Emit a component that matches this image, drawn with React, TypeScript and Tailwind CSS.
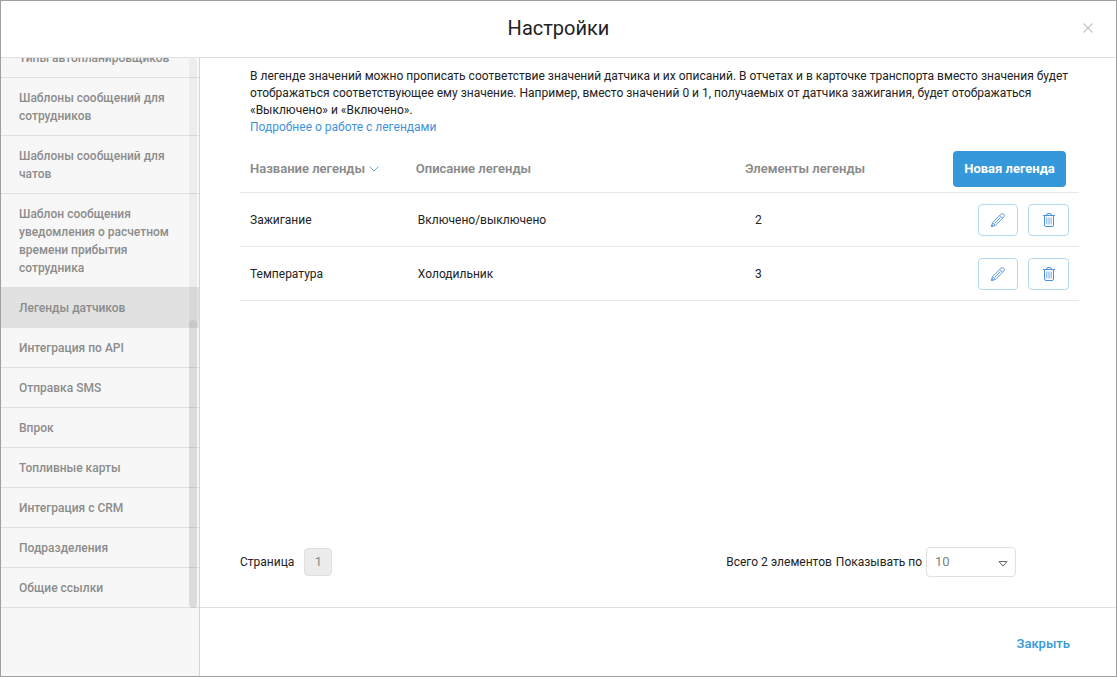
import { useState } from "react";
import clsx from "clsx";

const SECTIONS = [
  "Типы автопланировщиков",
  "Шаблоны сообщений для сотрудников",
  "Шаблоны сообщений для чатов",
  "Шаблон сообщения уведомления о расчетном времени прибытия сотрудника",
  "Легенды датчиков",
  "Интеграция по API",
  "Отправка SMS",
  "Впрок",
  "Топливные карты",
  "Интеграция с CRM",
  "Подразделения",
  "Общие ссылки",
];

const LEGENDS = [
  { name: "Зажигание", description: "Включено/выключено", count: 2 },
  { name: "Температура", description: "Холодильник", count: 3 },
];

const PAGE_SIZES = ["10", "25", "50"];

function PencilIcon() {
  return (
    <svg viewBox="0 0 14 14" className="h-3.5 w-3.5" fill="none" stroke="currentColor" strokeWidth="0.9" strokeLinejoin="round">
      <path d="M.6 13.4 1.5 9.7 10 1.2Q11.4.1 12.8 1.3 14 2.7 12.8 4L4.3 12.5Z" />
      <path d="M1.5 9.7 4.3 12.5M8.8 2.4 11.6 5.2M3.6 10.4 9.4 4.6" />
      <path d="M.6 13.4.9 12 2 13.1Z" fill="currentColor" />
    </svg>
  );
}

function TrashIcon() {
  return (
    <svg viewBox="0 0 12 14" className="h-3.5 w-3" fill="none" stroke="currentColor">
      <path d="M0 2.5H12M3.5 2.5Q3.5.5 5 .5H7Q8.5.5 8.5 2.5M1.5 3V12Q1.5 13.5 3 13.5H9Q10.5 13.5 10.5 12V3" />
      <path d="M3.8 4.5V11.5M6 4.5V11.5M8.2 4.5V11.5" strokeWidth="0.8" />
    </svg>
  );
}

export default function App() {
  const [active, setActive] = useState("Легенды датчиков");
  const [pageSize, setPageSize] = useState("10");

  return (
    <div className="flex h-screen flex-col border border-[#9f9f9f] bg-white font-['Roboto','Liberation_Sans',sans-serif] text-xs text-[#222]">
      {/* Header */}
      <header className="grid h-[57px] shrink-0 grid-cols-[1fr_auto_1fr] items-center border-b border-[#e0e0e0] px-5 pb-0.5">
        <h1 className="col-start-2 text-xl">Настройки</h1>
        <button aria-label="Закрыть окно" className="flex h-4 w-4 items-center justify-center justify-self-end text-[#c4c4c4]">
          <svg viewBox="0 0 10 10" className="h-2.5 w-2.5" stroke="currentColor" strokeWidth="1.2">
            <path d="M.5.5 9.5 9.5M9.5.5.5 9.5" />
          </svg>
        </button>
      </header>

      <div className="flex min-h-0 flex-1">
        {/* Sidebar */}
        <aside className="flex w-[199px] shrink-0 flex-col border-r border-[#d6d6d6] bg-[#f7f7f7]">
          <nav className="relative flex min-h-0 flex-1 flex-col justify-end overflow-hidden">
            {SECTIONS.map((section) => (
              <button
                key={section}
                onClick={() => setActive(section)}
                className={clsx(
                  "shrink-0 border-b pt-[11px] pr-6 pb-2.5 pl-[18px] text-left leading-[18px] font-medium text-[#8c8c8c]",
                  active === section ? "border-[#e1e1e1] bg-[#e1e1e1]" : "border-[#e0e0e0]"
                )}
              >
                {section}
              </button>
            ))}
            <div className="absolute inset-y-0 right-0.5 flex w-2 flex-col justify-end rounded-full bg-black/4">
              <div className="h-11/21 rounded-full bg-black/7" />
            </div>
          </nav>
          <div className="h-[68px] shrink-0" />
        </aside>

        <div className="flex min-w-0 flex-1 flex-col">
          <main className="flex min-h-0 flex-1 flex-col pt-2.5 pr-[37px] pb-[30px] pl-10">
            <p className="px-2.5 leading-[17px]">
              В легенде значений можно прописать соответствие значений датчика и их описаний. В отчетах и в карточке
              транспорта вместо значения будет отображаться соответствующее ему значение. Например, вместо значений 0 и
              1, получаемых от датчика зажигания, будет отображаться «Выключено» и «Включено».
              <br />
              <a href="#legends" className="text-[#3f93da]">Подробнее о работе с легендами</a>
            </p>

            <table className="mt-2.5 w-full table-fixed text-left">
              <thead>
                <tr className="h-[46px] border-b border-[#e8e8e8] text-[13px] text-[#8a8a8a]">
                  <th className="w-[20%] pl-2.5 font-semibold whitespace-nowrap">
                    <button className="flex items-center gap-1">
                      Название легенды
                      <svg viewBox="0 0 10 6" className="h-1.5 w-2.5 text-[#6fa8dc]" fill="none" stroke="currentColor">
                        <path d="M.5.5 5 5 9.5.5" />
                      </svg>
                    </button>
                  </th>
                  <th className="w-[39%] pl-2 font-semibold">Описание легенды</th>
                  <th className="w-[25%] pl-2.5 font-semibold">Элементы легенды</th>
                  <th className="pr-[13px] text-right">
                    <button className="h-9 w-[113px] rounded bg-[#3498db] font-bold whitespace-nowrap text-white">
                      Новая легенда
                    </button>
                  </th>
                </tr>
              </thead>
              <tbody>
                {LEGENDS.map((legend) => (
                  <tr key={legend.name} className="border-b border-[#e8e8e8]">
                    <td className="pt-0.5 pl-2.5">{legend.name}</td>
                    <td className="pt-0.5 pl-2.5">{legend.description}</td>
                    <td className="pt-0.5 pl-5">{legend.count}</td>
                    <td className="pt-[11px] pr-2.5 pb-2.5">
                      <div className="flex justify-end gap-2.5 text-[#4b90d9]">
                        <button aria-label="Изменить" className="flex h-8 w-10 items-center justify-center rounded border border-[#b5d8f1]">
                          <PencilIcon />
                        </button>
                        <button aria-label="Удалить" className="flex h-8 w-[41px] items-center justify-center rounded border border-[#b5d8f1]">
                          <TrashIcon />
                        </button>
                      </div>
                    </td>
                  </tr>
                ))}
              </tbody>
            </table>

            {/* Pagination */}
            <div className="mt-auto flex items-center justify-between pr-[63px]">
              <div className="flex items-center gap-2.5">
                Страница
                <button className="h-7 w-7 rounded-sm border border-[#e0e0e0] bg-[#ececec] text-[13px] text-[#8a8a8a]">1</button>
              </div>
              <div className="flex items-center gap-1">
                <span>Всего 2 элементов</span>
                <label htmlFor="page-size">Показывать по</label>
                <div className="relative">
                  <select
                    id="page-size"
                    value={pageSize}
                    onChange={(e) => setPageSize(e.target.value)}
                    className="h-[30px] w-[90px] appearance-none rounded border border-[#e0e0e0] bg-white px-2 text-[13px] text-[#808080]"
                  >
                    {PAGE_SIZES.map((size) => (
                      <option key={size}>{size}</option>
                    ))}
                  </select>
                  <svg viewBox="0 0 10 6" className="pointer-events-none absolute top-3.5 right-2 h-1.5 w-2.5" fill="none" stroke="#666">
                    <path d="M1 .5H9L5 5.2Z" />
                  </svg>
                </div>
              </div>
            </div>
          </main>

          <footer className="flex h-[69px] shrink-0 items-center justify-end border-t border-[#e0e0e0] pt-1 pr-[46px]">
            <button className="text-[13px] font-medium text-[#3498db]">Закрыть</button>
          </footer>
        </div>
      </div>
    </div>
  );
}
